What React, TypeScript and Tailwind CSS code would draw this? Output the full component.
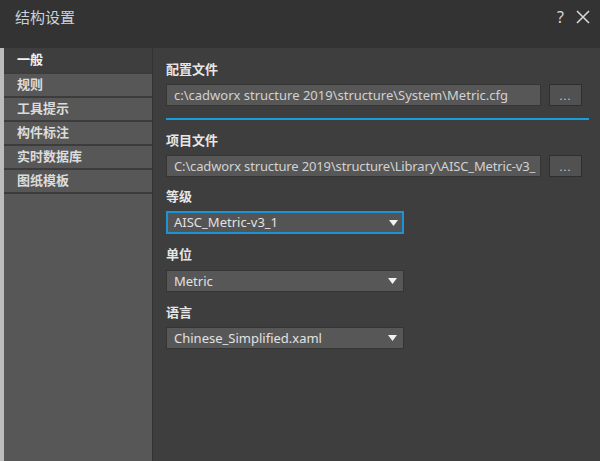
import React from "react";

const font = { fontFamily: '"Noto Sans", "Noto Sans CJK SC", sans-serif' };

const navItems = ["一般", "规则", "工具提示", "构件标注", "实时数据库", "图纸模板"];

function Arrow() {
  return (
    <svg width="9" height="6" viewBox="0 0 9 6" className="shrink-0">
      <polygon points="0,0 9,0 4.5,6" fill="#f2f2f2" />
    </svg>
  );
}

function PathField({ value, tight }: { value: string; tight?: boolean }) {
  return (
    <div className="flex items-center gap-[8px]">
      <div className="w-[375px] h-[22px] bg-[#575757] border border-[#353535] pl-[7px] flex items-center overflow-hidden">
        <span
          className={
            tight
              ? "text-[13px] text-[#d2d2d2] whitespace-nowrap leading-none tracking-[-0.15px]"
              : "text-[13px] text-[#d2d2d2] whitespace-nowrap leading-none"
          }
        >
          {value}
        </span>
      </div>
      <div className="w-[33px] h-[22px] bg-[#515151] border border-[#2f2f2f] flex items-center justify-center">
        <span className="text-[11px] text-[#cfcfcf] leading-none tracking-[1px]">...</span>
      </div>
    </div>
  );
}

function Select({ value, active }: { value: string; active?: boolean }) {
  return (
    <div
      className={
        active
          ? "w-[238px] h-[23px] bg-[#545454] border-2 border-[#1c93d4] pl-[6px] pr-[4px] flex items-center justify-between"
          : "w-[238px] h-[22px] bg-[#575757] border border-[#353535] pl-[7px] pr-[6px] flex items-center justify-between"
      }
    >
      <span className="text-[13px] text-[#e2e2e2] whitespace-nowrap leading-none">{value}</span>
      <Arrow />
    </div>
  );
}

function Label({ text, className }: { text: string; className: string }) {
  return (
    <div className={"h-[18px] flex items-center text-[13px] font-bold text-[#e6e6e6] " + className}>
      {text}
    </div>
  );
}

export default function App() {
  return (
    <div style={font} className="w-[600px] h-[461px] flex flex-col bg-[#3e3e3e] overflow-hidden">
      <header className="h-[48px] bg-[#333333] flex items-start justify-between pl-[15px] pr-[10px] pt-[7px]">
        <span className="text-[15px] text-[#c9d1da] leading-[20px]">结构设置</span>
        <div className="flex items-center gap-[12px] text-[#d6d6d6]">
          <span className="text-[16px] leading-[20px]">?</span>
          <svg width="14" height="14" viewBox="0 0 14 14">
            <path d="M1 1 L13 13 M13 1 L1 13" stroke="#d6d6d6" strokeWidth="1.6" />
          </svg>
        </div>
      </header>

      <div className="flex flex-1">
        <div className="w-[4px] bg-[#bcbcbc]" />
        <nav className="w-[149px] bg-[#575757] border-r border-[#333333] flex flex-col">
          {navItems.map((item, i) => (
            <div
              key={item}
              className={
                i === 0
                  ? "h-[24px] bg-[#3e3e3e] flex items-center pl-[13px] text-[13px] font-bold text-[#f2f2f2]"
                  : "h-[24px] border-t-2 border-[#3c3c3c] flex items-center pl-[13px] text-[13px] font-bold text-[#dcdcdc]"
              }
            >
              {item}
            </div>
          ))}
          <div className="border-t-2 border-[#3c3c3c]" />
        </nav>

        <main className="flex-1 pl-[13px] pr-[11px] pt-[13px] flex flex-col">
          <Label text="配置文件" className="" />
          <div className="mt-[5px]">
            <PathField value="c:\cadworx structure 2019\structure\System\Metric.cfg" />
          </div>
          <div className="mt-[12px] h-[2px] bg-[#169fdc]" />

          <Label text="项目文件" className="mt-[12px]" />
          <div className="mt-[5px]">
            <PathField value="C:\cadworx structure 2019\structure\Library\AISC_Metric-v3_" tight />
          </div>

          <Label text="等级" className="mt-[11px]" />
          <div className="mt-[5px]">
            <Select value="AISC_Metric-v3_1" active />
          </div>

          <Label text="单位" className="mt-[12px]" />
          <div className="mt-[6px]">
            <Select value="Metric" />
          </div>

          <Label text="语言" className="mt-[12px]" />
          <div className="mt-[5px]">
            <Select value="Chinese_Simplified.xaml" />
          </div>
        </main>
      </div>
    </div>
  );
}
